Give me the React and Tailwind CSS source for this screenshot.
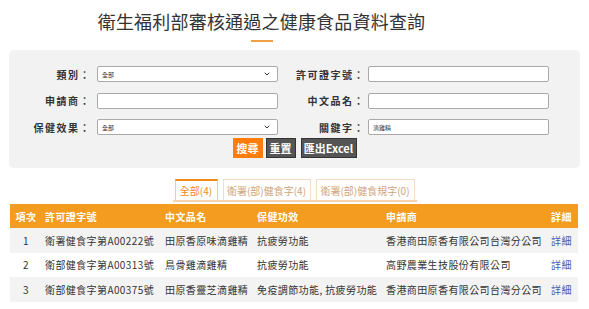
import { ChevronDown } from 'lucide-react';

const rows = [
  { no: 1, id: '衛署健食字第A00222號', name: '田原香原味滴雞精', effect: '抗疲勞功能', maker: '香港商田原香有限公司台灣分公司' },
  { no: 2, id: '衛部健食字第A00313號', name: '鳥骨雞滴雞精', effect: '抗疲勞功能', maker: '高野農業生技股份有限公司' },
  { no: 3, id: '衛部健食字第A00375號', name: '田原香靈芝滴雞精', effect: '免疫調節功能, 抗疲勞功能', maker: '香港商田原香有限公司台灣分公司' },
];

function Label({ children, className }) {
  return (
    <label className={`text-right text-[10px] font-bold tracking-[1.5px] text-[#333] ${className}`}>
      {children}：
    </label>
  );
}

function Select({ value }) {
  return (
    <div className="flex h-[16px] w-[181px] items-center justify-between rounded-[2px] border border-[#aaa] bg-white pl-[4px] pr-[6px]">
      <span className="text-[6px] text-[#333]">{value}</span>
      <ChevronDown className="h-[8px] w-[8px] text-[#333]" strokeWidth={3} />
    </div>
  );
}

function Input({ value }) {
  return (
    <div className="flex h-[16px] w-[181px] items-center rounded-[2px] border border-[#aaa] bg-white pl-[4px]">
      <span className="text-[6px] text-[#333]">{value}</span>
    </div>
  );
}

export default function App() {
  return (
    <div className="h-[309px] w-[589px] overflow-hidden bg-white font-['Noto_Sans_CJK_TC',sans-serif]">
      <div className="flex flex-col items-center pr-[66px] pt-[9px]">
        <h1 className="text-[18px] leading-[24px] tracking-[0.2px] text-[#333]">衛生福利部審核通過之健康食品資料查詢</h1>
        <div className="mt-[7px] h-[2px] w-[22px] bg-[#f0a040]" />
      </div>

      <div className="mx-[9px] mt-[8px] h-[118px] rounded-[5px] bg-[#f2f2f2] pt-[16px]">
        <div className="flex flex-col gap-[10.5px]">
          <div className="flex items-center">
            <Label className="w-[82px]">類別</Label>
            <div className="ml-[6px]"><Select value="全部" /></div>
            <Label className="w-[87px]">許可證字號</Label>
            <div className="ml-[3px]"><Input value="" /></div>
          </div>
          <div className="flex items-center">
            <Label className="w-[82px]">申請商</Label>
            <div className="ml-[6px]"><Input value="" /></div>
            <Label className="w-[87px]">中文品名</Label>
            <div className="ml-[3px]"><Input value="" /></div>
          </div>
          <div className="flex items-center">
            <Label className="w-[82px]">保健效果</Label>
            <div className="ml-[6px]"><Select value="全部" /></div>
            <Label className="w-[87px]">關鍵字</Label>
            <div className="ml-[3px]"><Input value="滴雞精" /></div>
          </div>
        </div>
        <div className="mt-[3px] flex justify-center gap-[3px] text-[11px] font-bold leading-none">
          <button className="h-[20px] w-[30px] bg-[#ff7d0a] text-white">搜尋</button>
          <button className="h-[20px] w-[30px] border border-[#333] bg-[#555] text-white">重置</button>
          <button className="ml-[2px] h-[20px] w-[56px] border border-[#333] bg-[#555] text-white">匯出Excel</button>
        </div>
      </div>

      <div className="mt-[11px] flex justify-center">
        <div className="flex gap-[5px] border-b-2 border-[#fbd3ad] px-[2px]">
          <div className="flex h-[21px] w-[43px] items-center justify-center border-x border-t-2 border-x-[#f8c89a] border-t-[#f38a1a] bg-white text-[10px] text-[#f38a1a]">全部(4)</div>
          <div className="flex h-[21px] w-[88px] items-center justify-center border-x border-t border-[#f7dcc4] text-[10px] text-[#d0a47a]">衛署(部)健食字(4)</div>
          <div className="flex h-[21px] w-[99px] items-center justify-center border-x border-t border-[#f7dcc4] text-[10px] text-[#d0a47a]">衛署(部)健食規字(0)</div>
        </div>
      </div>

      <table className="ml-[10px] mt-[2px] w-[568px] table-fixed border-collapse text-[10px] tracking-[0.4px] text-[#333]">
        <colgroup>
          <col className="w-[32px]" />
          <col className="w-[120px]" />
          <col className="w-[92px]" />
          <col className="w-[129px]" />
          <col className="w-[165px]" />
          <col />
        </colgroup>
        <thead>
          <tr className="h-[24px] bg-[#f39c1f] text-left font-bold text-white">
            <th className="text-center">項次</th>
            <th className="pl-[3px]">許可證字號</th>
            <th className="pl-[3px]">中文品名</th>
            <th className="pl-[3px]">保健功效</th>
            <th className="pl-[3px]">申請商</th>
            <th className="pl-[3px]">詳細</th>
          </tr>
        </thead>
        <tbody>
          {rows.map((r, i) => (
            <tr key={r.no} className={`h-[24.5px] ${i % 2 === 0 ? 'bg-[#f3f3f3]' : 'bg-white'}`}>
              <td className="text-center">{r.no}</td>
              <td className="pl-[3px] whitespace-nowrap">{r.id}</td>
              <td className="pl-[3px] whitespace-nowrap">{r.name}</td>
              <td className="pl-[3px] whitespace-nowrap">{r.effect}</td>
              <td className="pl-[3px] whitespace-nowrap">{r.maker}</td>
              <td className="pl-[3px] text-[#4b5bb0]">詳細</td>
            </tr>
          ))}
        </tbody>
      </table>
    </div>
  );
}
